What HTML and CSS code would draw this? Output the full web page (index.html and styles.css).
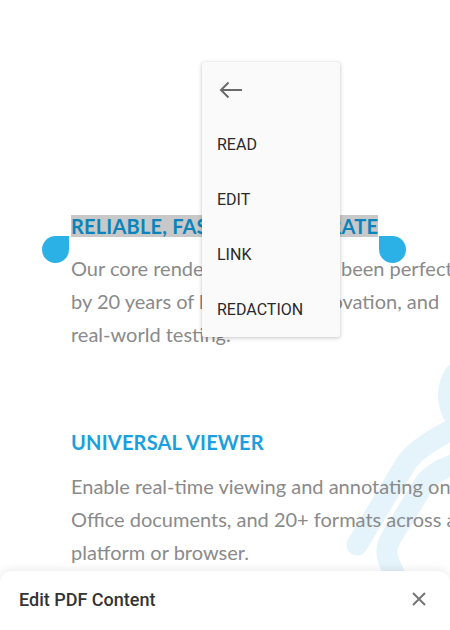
FILE: index.html
```html
<!DOCTYPE html>
<html lang="en">
<head>
<meta charset="utf-8">
<title>Edit PDF Content</title>
<link rel="stylesheet" href="styles.css">
</head>
<body>
<div class="page">
  <svg class="watermark" width="110" height="220" viewBox="340 360 110 220" aria-hidden="true">
    <g fill="none" stroke="#e5f3fb" stroke-width="21" stroke-linecap="round" stroke-linejoin="round">
      <path d="M357 545 L405 465 Q415 448 455 428"/>
      <path d="M398 582 L389 562 Q384 550 391 538 L424 484 Q432 472 455 464"/>
      <path d="M455 374 Q443 392 453 414"/>
    </g>
  </svg>

  <div class="content">
    <section class="feature">
      <h2 class="feature-title"><span class="selected">RELIABLE, FAST AND ACCURATE</span></h2>
      <p class="feature-text">Our core rendering engine has been perfected<br>by 20 years of knowledge, innovation, and<br>real-world testing.</p>
    </section>
    <section class="feature feature-second">
      <h2 class="feature-title">UNIVERSAL VIEWER</h2>
      <p class="feature-text">Enable real-time viewing and annotating on<br>Office documents, and 20+ formats across any<br>platform or browser.</p>
    </section>
  </div>

  <span class="handle handle-start"></span>
  <span class="handle handle-end"></span>

  <div class="menu">
    <div class="menu-item menu-back">
      <svg width="26" height="20" viewBox="0 0 26 20" aria-hidden="true">
        <path d="M24 10 H3 M10.5 2.5 L3 10 L10.5 17.5" fill="none" stroke="#6a6a6a" stroke-width="2"/>
      </svg>
    </div>
    <div class="menu-item">READ</div>
    <div class="menu-item">EDIT</div>
    <div class="menu-item">LINK</div>
    <div class="menu-item">REDACTION</div>
  </div>

  <div class="sheet">
    <span class="sheet-title">Edit PDF Content</span>
    <svg class="sheet-close" width="16" height="16" viewBox="0 0 16 16" aria-hidden="true">
      <path d="M2 2 L14 14 M14 2 L2 14" stroke="#757575" stroke-width="2" fill="none"/>
    </svg>
  </div>
</div>
</body>
</html>
```

FILE: styles.css
```css
html, body {
  margin: 0;
  padding: 0;
  background: #ffffff;
  overflow: hidden;
}

.page {
  position: relative;
  width: 450px;
  height: 630px;
  overflow: hidden;
}

.watermark {
  position: absolute;
  left: 340px;
  top: 360px;
  z-index: 0;
}

.content {
  position: relative;
  z-index: 1;
  padding: 215px 0 0 71px;
  font-family: "Lato", "Liberation Sans", sans-serif;
  white-space: nowrap;
}

.feature {
  margin: 0;
}

.feature-second {
  margin-top: 80px;
}

.feature-title {
  margin: 0;
  font-size: 20px;
  line-height: 22px;
  height: 22px;
  font-weight: 700;
  letter-spacing: 0.2px;
  color: #1aa0de;
}

.selected {
  display: inline-block;
  vertical-align: top;
  height: 22px;
  line-height: 22px;
  background: #c8c8c8;
  color: #0b84bb;
}

.feature-text {
  margin: 15px 0 0;
  font-size: 20px;
  line-height: 33px;
  color: #8a8a8a;
}

.feature-second .feature-text {
  margin-top: 17px;
}

.handle {
  position: absolute;
  top: 236px;
  width: 27px;
  height: 27px;
  background: #2cb1e6;
  z-index: 2;
}

.handle-start {
  left: 42px;
  border-radius: 50% 0 50% 50%;
}

.handle-end {
  left: 379px;
  border-radius: 0 50% 50% 50%;
}

.menu {
  position: absolute;
  left: 202px;
  top: 62px;
  width: 138px;
  background: #fafafa;
  border-radius: 2px;
  box-shadow: 0 1px 4px rgba(0, 0, 0, 0.22), 0 0 1px rgba(0, 0, 0, 0.12);
  z-index: 3;
  display: flex;
  flex-direction: column;
}

.menu-item {
  height: 55px;
  display: flex;
  align-items: center;
  padding-left: 15px;
  font-family: "Roboto", "Liberation Sans", sans-serif;
  font-size: 16px;
  font-weight: 400;
  color: #2a2a2a;
}

.menu-back {
  padding-left: 16px;
}

.menu-back svg {
  display: block;
}

.sheet {
  position: absolute;
  left: 0;
  right: 0;
  bottom: 0;
  height: 59px;
  background: #ffffff;
  border-radius: 12px 12px 0 0;
  box-shadow: 0 -2px 8px rgba(0, 0, 0, 0.08);
  z-index: 4;
  display: flex;
  align-items: center;
  justify-content: space-between;
  padding: 0 23px 3px 19px;
  box-sizing: border-box;
}

.sheet-title {
  font-family: "Roboto", "Liberation Sans", sans-serif;
  font-size: 18px;
  font-weight: 500;
  color: #333333;
}

.sheet-close {
  display: block;
}
```
